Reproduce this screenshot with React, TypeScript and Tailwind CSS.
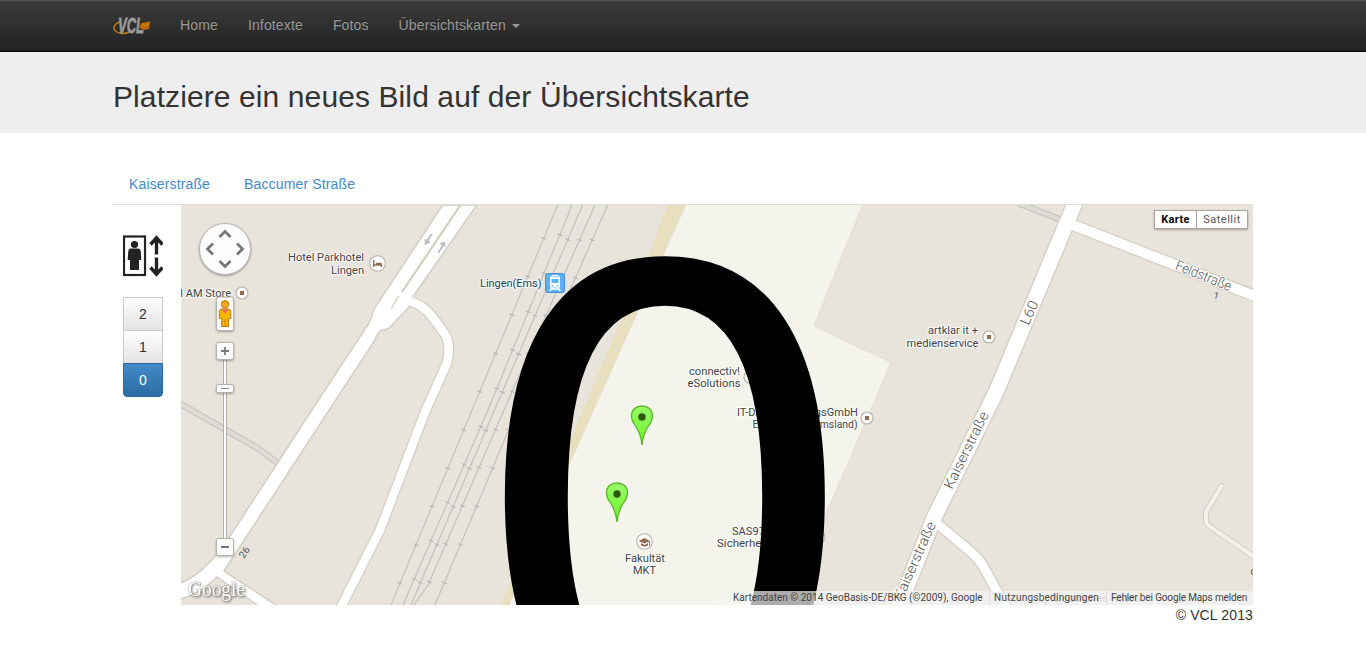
import React from "react";

const navItems = ["Home", "Infotexte", "Fotos"];

const rails = [
  { d: "M557.7,205 L472,410 L391,605", offset: -35.5 },
  { d: "M572,205 L488,410 L403,605", offset: -31.5 },
  { d: "M582.7,205 L494.5,410 L411,605", offset: -37 },
  { d: "M595,205 L504,410 L428,585 L414,605", offset: -37.5 },
  { d: "M607.7,205 L517,410 L435,605", offset: -37.5 },
];

function Logo() {
  return (
    <svg width="38" height="22" viewBox="0 0 38 22" className="block tracking-normal">
      <path d="M8,8 C1,9 -1,14.5 3,17.5 C6,20 12,20 16,18" fill="none" stroke="#c87604" strokeWidth="1.4" />
      <path d="M28.5,9 L37,7.5 L36,15 L30,16 L26,13 Z" fill="#b96a05" />
      <path d="M29,9.5 L33,12 L37,8" fill="none" stroke="#e08a0c" strokeWidth="1" />
      <text
        x="5" y="19" textLength="26" lengthAdjust="spacingAndGlyphs" fill="#999" stroke="#999" strokeWidth="0.8"
        className="font-['Liberation_Sans',sans-serif] text-[22px] font-bold italic"
      >
        VCL
      </text>
    </svg>
  );
}

function ElevatorIcon() {
  return (
    <svg width="40" height="42" viewBox="0 0 40 42" className="block" fill="#222">
      <rect x="1" y="1.5" width="21" height="38.5" fill="#fff" stroke="#222" strokeWidth="2.2" />
      <circle cx="11.5" cy="9.5" r="3.6" />
      <path d="M8,13.5 H15 Q17.6,13.8 17.8,17 L18.3,25 H16 V35 H7 V25 H4.7 L5.2,17 Q5.4,13.8 8,13.5 Z" />
      <path d="M33.5,19.5 V3 M27.5,9.5 L33.5,2.8 L39.5,9.5" fill="none" stroke="#222" strokeWidth="3.4" />
      <path d="M33.5,22.5 V39 M27.5,32.5 L33.5,39.2 L39.5,32.5" fill="none" stroke="#222" strokeWidth="3.4" />
    </svg>
  );
}

type LabelProps = {
  x: number;
  y: number;
  w?: number;
  anchor?: "start" | "middle" | "end";
  fill?: string;
  children: string;
};

function Label({ x, y, w, anchor = "end", fill = "#444", children }: LabelProps) {
  return (
    <text
      x={x} y={y} textAnchor={anchor} textLength={w} lengthAdjust="spacingAndGlyphs" fill={fill}
      stroke="#fff" strokeOpacity="0.75" strokeWidth="2.4" strokeLinejoin="round" paintOrder="stroke"
      className="font-[Roboto,sans-serif] text-[11.5px]"
    >
      {children}
    </text>
  );
}

function Street({ x, y, angle, w, children }: { x: number; y: number; angle: number; w: number; children: string }) {
  return (
    <text
      transform={`translate(${x} ${y}) rotate(${angle})`} textLength={w} lengthAdjust="spacingAndGlyphs" fill="#555"
      stroke="#fff" strokeWidth="2" paintOrder="stroke"
      className="font-[Roboto,sans-serif] text-[14px] font-light"
    >
      {children}
    </text>
  );
}

function Poi({ x, y, r = 6, dot = true }: { x: number; y: number; r?: number; dot?: boolean }) {
  return (
    <g>
      <circle cx={x} cy={y} r={r} fill="#fff" stroke="#b5b0aa" strokeWidth="1.1" />
      {dot && <rect x={x - 2} y={y - 2} width="4" height="4" fill="#946a4c" />}
    </g>
  );
}

function Pin({ x, y }: { x: number; y: number }) {
  return (
    <g transform={`translate(${x} ${y})`}>
      <path
        d="M0,39.5 C-0.8,31 -2.5,26.5 -6.5,20.5 C-9,17 -10.5,15 -10.5,10.5 C-10.5,4 -6,0.5 0,0.5 C6,0.5 10.5,4 10.5,10.5 C10.5,15 9,17 6.5,20.5 C2.5,26.5 0.8,31 0,39.5 Z"
        fill="url(#pin)" stroke="#59b52c" strokeWidth="1.3"
      />
      <circle cx="0" cy="11.5" r="3.7" fill="#2c5a10" />
    </g>
  );
}

function Roads() {
  return (
    <g strokeLinejoin="round">
      <g fill="none">
        <path d="M178,402.5 L259,449 L280,465 M1018,203 L1064,221" stroke="#c5c1bc" strokeWidth="6.5" />
        <path d="M178,402.5 L259,449 L280,465 M1018,203 L1064,221" stroke="#dfdbd6" strokeWidth="4.5" />
      </g>
      <g fill="none" stroke="#c1c1c1" strokeWidth="1.2">
        {rails.map(({ d }) => <path key={d} d={d} />)}
      </g>
      <g fill="none" stroke="#bbb" strokeWidth="5" strokeDasharray="1.4 40.1">
        {rails.map(({ d, offset }) => <path key={d} d={d} strokeDashoffset={offset} />)}
      </g>
      <g fill="none" stroke="#d3cec1">
        <path d="M405,300 C425,304 432,315 446,336 C450,345 449,355 447,363 L425,412 L380,530 L340,609" strokeWidth="11" />
        <path d="M1075,203 L1004,373 L996,392 L934,518 L898,609" strokeWidth="17.5" />
        <path d="M1073,225 L1256,296.5" strokeWidth="12.5" />
        <path d="M933,520 L972,553 Q979,559 983,566 L1007,609" strokeWidth="11.5" />
        <path d="M1221.5,486 L1206,512 V520 Q1206,524 1209,526 L1256,558" strokeWidth="6" strokeLinecap="round" />
      </g>
      <path
        d="M442.7,205 L378,303 Q372,311 372,316 L369,323 L312.5,409 L232,533 Q205,575 178,584 V600 Q200,594 217,577 L263,609 H282 L224,571 L375,340 Q378,331 383,330 Q390,329 393,324 L410,306 L408,304 L476.7,205 Z"
        fill="#fff" stroke="#d3cec1" strokeWidth="1.5"
      />
      <g fill="none" stroke="#fff">
        <path d="M403,299 C425,304 432,315 446,336 C450,345 449,355 447,363 L425,412 L380,530 L340,609" strokeWidth="8.6" />
        <path d="M1075,203 L1004,373 L996,392 L934,518 L898,609" strokeWidth="14.8" />
        <path d="M1073,225 L1256,296.5" strokeWidth="10" />
        <path d="M933,520 L972,553 Q979,559 983,566 L1007,609" strokeWidth="9" />
      </g>
      <path d="M1221.5,486 L1206,512 V520 Q1206,524 1209,526 L1256,558" fill="none" stroke="#f3f1ec" strokeWidth="4" strokeLinecap="round" />
      <path d="M460.5,205 L402,292" stroke="#d3cec1" strokeWidth="2.2" />
      <path d="M399,296 L391,309" stroke="#dcd7cc" strokeWidth="1.5" />
      <g fill="#b9bec2">
        <path d="M431,233.5 L432.6,234.5 L428.6,240.8 L430.8,242.2 L424.7,245.2 L424.6,238.4 L426.8,239.8 Z" />
        <path d="M437.5,252.6 L439,253.4 L443.6,246 L445.7,247.3 L444.8,241.5 L439.5,243.6 L441.9,245 Z" />
      </g>
    </g>
  );
}

function MapCanvas() {
  return (
    <svg width="1072" height="400" viewBox="181 205 1072 400" className="block">
      <defs>
        <linearGradient id="pin" x1="0" y1="0" x2="0" y2="1">
          <stop offset="0" stopColor="#98fb67" />
          <stop offset="1" stopColor="#6ff028" />
        </linearGradient>
      </defs>
      <rect x="181" y="205" width="1072" height="400" fill="#e8e4dc" />
      <path d="M686,204 H863 L814,326 L891,362.5 L786,607 H508 L568,467 Z" fill="#f4f4ec" stroke="#dfdfd8" />
      <path d="M668,204 H686 L662,257 L568,467 L508,607 H500 L569,443 L648,257 Z" fill="#e8dfbf" />
      <Roads />
      <Street x={1028.5} y={326} angle={-66} w={25}>L60</Street>
      <Street x={952} y={490} angle={-64} w={84}>Kaiserstraße</Street>
      <Street x={902} y={601} angle={-66} w={84}>Kaiserstraße</Street>
      <Street x={1174.5} y={269} angle={22} w={59}>Feldstraße</Street>
      <text transform="translate(1213 298) rotate(15)" fill="#555" className="font-[Roboto,sans-serif] text-[9px]">1</text>
      <text transform="translate(244 559) rotate(-56)" fill="#555" className="font-[Roboto,sans-serif] text-[10px]">26</text>
      <text x="1250.5" y="575" fill="#555" className="font-[Roboto,sans-serif] text-[10px]">c</text>

      <Label x={364} y={261} w={76}>Hotel Parkhotel</Label>
      <Label x={364} y={274} w={33}>Lingen</Label>
      <Poi x={377.5} y={263.5} r={7.8} dot={false} />
      <path d="M373.8,260 V267 M373.8,265 H381.5 V267 M376,263.5 H381 V265" fill="none" stroke="#946a4c" strokeWidth="1.4" />
      <Label x={231} y={297} w={51}>I AM Store</Label>
      <Poi x={242} y={293} />
      <Label x={541.5} y={287} w={61.5} fill="#173f63">Lingen(Ems)</Label>
      <Label x={740} y={374.5} w={51}>connectiv!</Label>
      <Label x={740.5} y={387} w={53}>eSolutions</Label>
      <Poi x={750} y={377} dot={false} />
      <Label x={858} y={416} w={121}>IT-Dienst leistungsGmbH</Label>
      <Label x={857.5} y={428} w={105}>Emsland eG (Emsland)</Label>
      <Poi x={867} y={418} />
      <Label x={978} y={333.5} w={50}>artklar it +</Label>
      <Label x={978.5} y={346.5} w={72}>medienservice</Label>
      <Poi x={989} y={337} />
      <Label x={732} y={535} w={33} anchor="start">SAS97</Label>
      <Label x={717} y={547} w={51} anchor="start">Sicherheit</Label>
      <Poi x={819} y={537} dot={false} />
      <Poi x={644.5} y={541.5} r={7.8} dot={false} />
      <path d="M638.5,541 L644.5,538 L650,541 L644.5,543.5 Z M641,543 L644.5,545 L648,543 V545.4 L644.5,546.8 L641,545.4 Z M649,541 H650 V545.5 H649 Z" fill="#946a4c" />
      <Label x={645} y={562} w={40} anchor="middle">Fakultät</Label>
      <Label x={644.5} y={574} w={23} anchor="middle">MKT</Label>
      <Label x={1054} y={602} anchor="start" fill="#777">Deutsches Rotes</Label>
      <Poi x={1041} y={608} dot={false} />

      <text x="665" y="727.5" textAnchor="middle" fill="#000" className="font-['DejaVu_Sans',sans-serif] text-[635px]">0</text>

      <g>
        <rect x="545.5" y="273.5" width="19" height="19" rx="2.5" fill="#5fb0f8" stroke="#4a90d8" />
        <path d="M552,275 H558 V276.5 H560 V287.5 H550 V276.5 H552 Z" fill="#fff" />
        <path d="M552,276.6 H558 V277.2 H552 Z M551.5,279 H558.5 V283 H551.5 Z M551.5,285 H553 V286.4 H551.5 Z M557,285 H558.5 V286.4 H557 Z" fill="#5fb0f8" />
        <path d="M552.5,287 L549.8,291 M557.5,287 L560.2,291 M551.5,289 H558.5" stroke="#fff" strokeWidth="1.6" />
      </g>

      <Pin x={642} y={405.5} />
      <Pin x={617} y={482.5} />

      <text
        x="188" y="596" textLength="57" lengthAdjust="spacingAndGlyphs" fill="#fff" stroke="#8a8a85" strokeWidth="1" strokeOpacity="0.5" paintOrder="stroke"
        className="font-['Liberation_Serif',serif] text-[21px] drop-shadow-[1px_1px_1px_rgba(0,0,0,0.5)]"
      >
        Google
      </text>

      <g className="drop-shadow-[0_1px_1px_rgba(0,0,0,0.35)]">
        <circle cx="225" cy="249" r="25.5" fill="#fdfdfd" stroke="#bbb6b0" />
        <path d="M219.5,237 L225,231.5 L230.5,237 M219.5,261 L225,266.5 L230.5,261 M213,243.5 L207.5,249 L213,254.5 M237,243.5 L242.5,249 L237,254.5" fill="none" stroke="#777" strokeWidth="2.8" />
      </g>
      <path d="M223.5,360 H226.5 V539 H223.5 Z" fill="#fff" stroke="#b0aca6" />
      <g fill="#fdfdfd" stroke="#b5b1ab" className="drop-shadow-[0_1px_1px_rgba(0,0,0,0.3)]">
        <rect x="216.5" y="297" width="17" height="33.5" rx="2" />
        <rect x="216.5" y="342.5" width="17" height="17" rx="2" />
        <rect x="216.5" y="384.5" width="17" height="8" rx="1.5" />
        <rect x="216.5" y="538.5" width="17" height="17" rx="2" />
      </g>
      <path d="M221,351 H229 M225,347 V355 M221,547 H229" stroke="#777" strokeWidth="1.8" />
      <path d="M221,388.5 H229" stroke="#888" />
      <g fill="#f8b500" stroke="#b87808" strokeWidth="1">
        <path d="M221,309 H229 L230.8,311 V318.5 H228.5 V326.5 H221.7 V318.5 H219.3 V311 Z" />
        <circle cx="225" cy="304.3" r="3.7" fill="#f0a818" />
      </g>
      <path d="M221.8,309.5 H228.5 L225,313.5 Z" fill="#f0645c" />
      <path d="M225,319 V326" stroke="#b87808" strokeWidth="0.8" />
    </svg>
  );
}

export default function App() {
  return (
    <div className="h-[660px] overflow-hidden bg-white font-['Liberation_Sans',Arial,sans-serif] text-sm tracking-[0.14px] text-[#333]">
      <nav className="h-[52px] border-t border-b border-t-[#555] border-b-[#090909] bg-linear-to-b from-[#3c3c3c] to-[#222]">
        <div className="mx-auto flex h-[48px] w-[1140px] items-center text-[#999]">
          <a className="mr-[29px] block w-[38px]"><Logo /></a>
          <div className="flex gap-[30px] leading-5 [text-shadow:0_-1px_0_rgba(0,0,0,0.25)]">
            {navItems.map((item) => <a key={item}>{item}</a>)}
            <a className="flex items-center">
              Übersichtskarten
              <span className="ml-1.5 mt-0.5 border-x-4 border-t-4 border-x-transparent border-t-[#999]" />
            </a>
          </div>
        </div>
      </nav>

      <header className="h-[81px] bg-[#eee]">
        <h1 className="mx-auto w-[1140px] pt-[28px] text-[30px] leading-[33px] tracking-[0.1px]">
          Platziere ein neues Bild auf der Übersichtskarte
        </h1>
      </header>

      <main className="mx-auto w-[1140px] pt-[30px]">
        <div className="flex h-[42px] gap-[34px] border-b border-[#ddd] px-4 pt-[11px] leading-5 text-[#428bca]">
          <a>Kaiserstraße</a>
          <a>Baccumer Straße</a>
        </div>
        <div className="flex">
          <aside className="w-[68px] pl-[10px] pt-[30px]">
            <ElevatorIcon />
            <div className="mt-5 flex w-10 flex-col text-center leading-5 text-[#333]">
              <button className="h-[34px] border border-[#ccc] bg-linear-to-b from-white to-[#e3e3e3]">2</button>
              <button className="-mt-px h-[34px] border border-[#ccc] bg-linear-to-b from-white to-[#e3e3e3]">1</button>
              <button className="-mt-px h-[34px] rounded-b border border-[#2b669a] bg-linear-to-b from-[#428bca] to-[#2d6ca2] text-white">0</button>
            </div>
          </aside>
          <section className="relative h-[400px] w-[1072px] overflow-hidden tracking-normal">
            <MapCanvas />
            <div className="absolute right-[5px] top-[5px] flex h-[19px] border border-[#aaa69f] bg-white font-[Roboto,sans-serif] text-[11px] leading-[18px] shadow-[0_1px_2px_rgba(0,0,0,0.3)]">
              <span className="w-[42px] border-r border-[#aaa69f] text-center font-bold tracking-[0.3px] text-black">Karte</span>
              <span className="w-[50px] text-center tracking-[0.5px] text-[#555]">Satellit</span>
            </div>
            <div className="absolute bottom-0 right-0 flex h-[14px] w-[541px] justify-end bg-linear-to-r from-[#f5f5f5]/0 via-[#f5f5f5]/70 via-5% to-[#f5f5f5]/70 font-[Roboto,sans-serif] text-[10px] leading-[13px] text-[#444]">
              <span className="w-[256px] whitespace-nowrap tracking-[0.02px]">Kartendaten © 2014 GeoBasis-DE/BKG (©2009), Google</span>
              <span className="w-[117px] whitespace-nowrap border-l border-[#e5e0d8] pl-1 tracking-[0.25px]">Nutzungsbedingungen</span>
              <span className="w-[147px] whitespace-nowrap border-l border-[#e5e0d8] pl-1 tracking-[-0.14px]">Fehler bei Google Maps melden</span>
            </div>
          </section>
        </div>
        <footer className="text-right leading-5">© VCL 2013</footer>
      </main>
    </div>
  );
}
